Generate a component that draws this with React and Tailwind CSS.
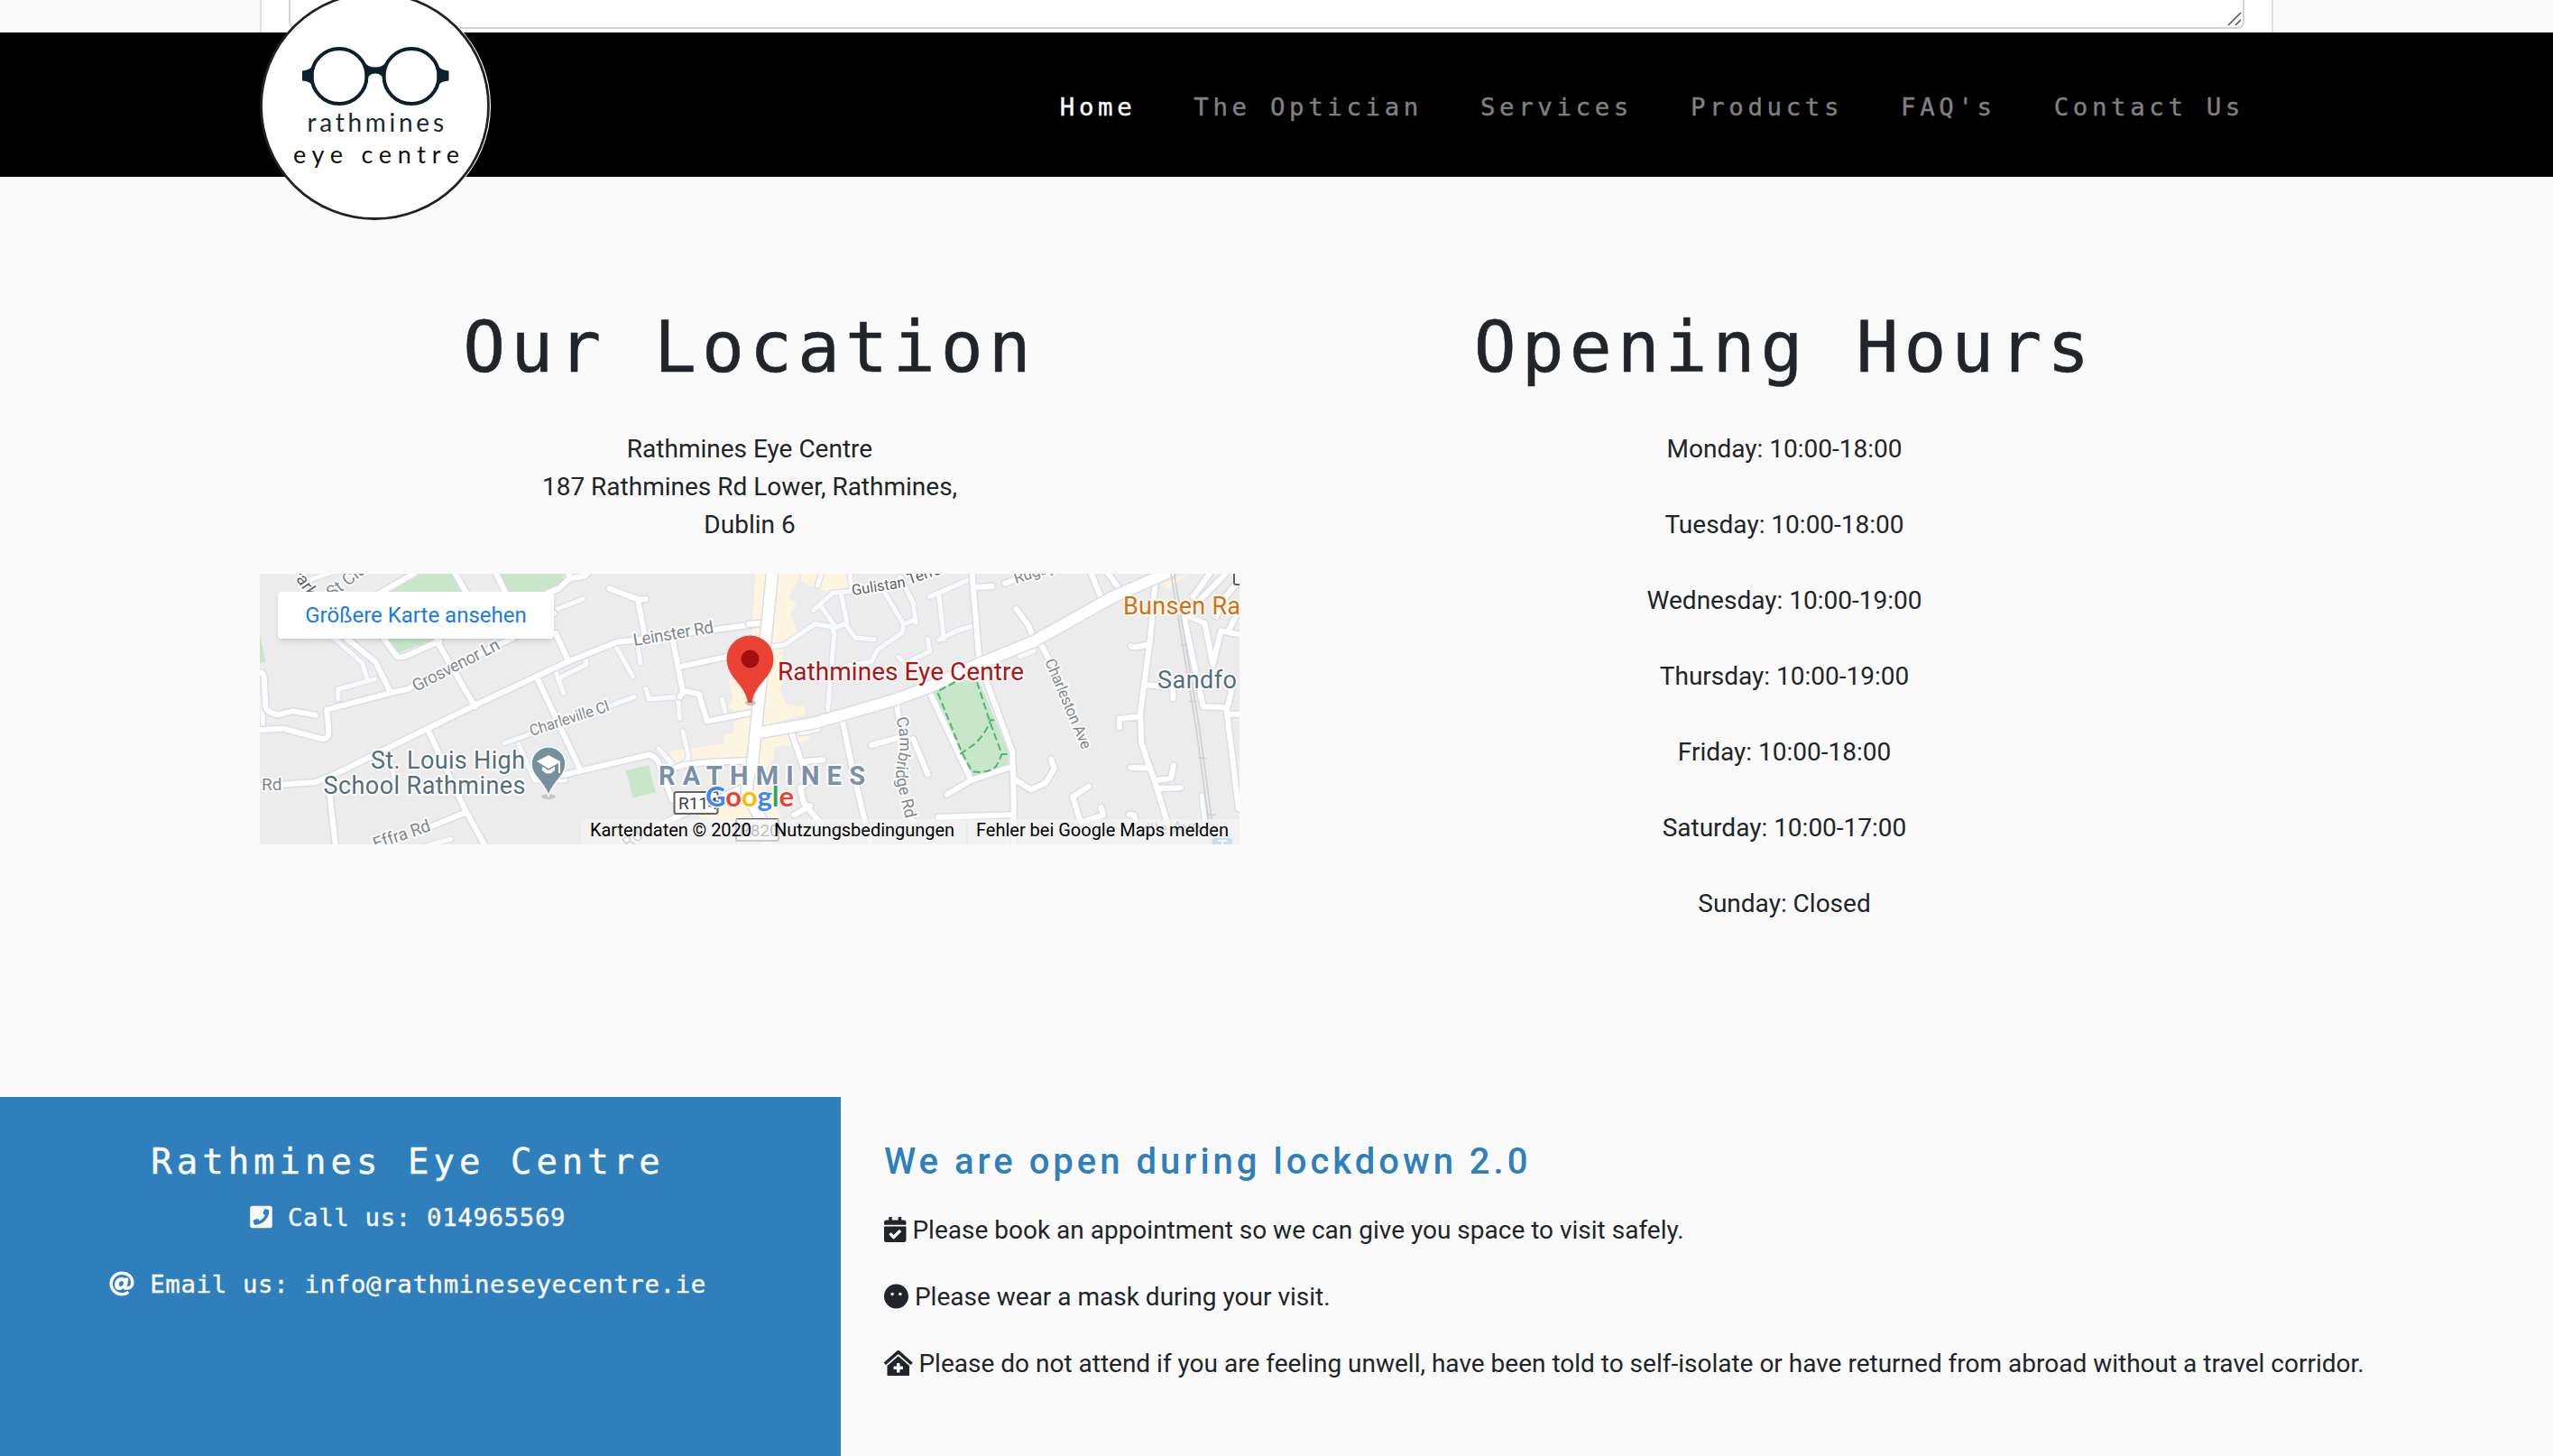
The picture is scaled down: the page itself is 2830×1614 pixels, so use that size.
import React from "react";
import {
  FaPhoneSquare,
  FaAt,
  FaCalendarCheck,
  FaMehBlank,
  FaClinicMedical,
} from "react-icons/fa";

const NAV = ["Home", "The Optician", "Services", "Products", "FAQ's", "Contact Us"];

const HOURS = [
  "Monday: 10:00-18:00",
  "Tuesday: 10:00-18:00",
  "Wednesday: 10:00-19:00",
  "Thursday: 10:00-19:00",
  "Friday: 10:00-18:00",
  "Saturday: 10:00-17:00",
  "Sunday: Closed",
];

// West half of the street network.
const WEST_LANES =
  "M240 250 L340 345 L355 395 M380 398 L265 432 L265 465 M940 375 L965 445 M950 395 L1035 350 L1035 330 M945 165 L1025 132 M30 460 L32 560 M1125 285 L1180 390 M1195 285 L1203 345 M780 612 L1185 458 M825 615 L875 735 L970 735 M1260 630 L1310 690 Q1355 680 1352 650 L1335 572 M500 965 L615 930 M160 75 L240 45 M430 680 L440 730 M1220 430 L1230 465 L1325 457 M1320 460 L1325 530 M1457 465 L1468 515";
const WEST_STREETS =
  "M0 755 L190 742 Q230 730 330 675 L700 480 L980 340 L1130 275 L1180 270 L1580 213 M0 568 L95 563 L215 597 Q235 598 236 575 L230 500 L425 445 L480 432 L830 250 L935 180 M290 262 L380 340 L427 440 M22 375 Q34 375 35 395 L40 490 Q45 512 80 517 L125 505 L195 518 M570 270 L690 490 M545 570 L660 835 L725 960 M885 400 L1015 695 M940 245 L980 338 M500 48 L390 115 M625 40 L665 115 M752 40 L785 112 M915 112 L950 98 L985 62 L1030 57 L1040 45 M985 62 L978 40 M405 262 L445 320 Q455 330 475 322 L580 272 M1107 97 L1195 133 L1220 133 M1195 133 L1217 255 M1305 275 L1335 440 M1335 355 L1490 320 M1325 457 L1340 438 L1385 448 L1410 538 L1548 510 M960 718 L1230 650 Q1255 655 1264 690 L1302 800 M1310 695 Q1330 675 1540 670 M238 775 L258 960 M660 842 L550 890 M1515 760 Q1460 790 1330 850 L1230 900 L1150 960";

// East half, in its own local origin.
const EAST_LANES =
  "M200 170 L260 112 L330 106 M220 150 L270 227 L305 212 L285 112 M300 215 L330 262 L390 266 M312 40 L320 100 M213 88 L225 50 M410 90 L480 215 L475 245 L400 300 L380 340 L300 355 M470 60 L510 145 L518 210 M480 215 L515 202 M560 125 L690 65 M590 120 L605 265 M590 268 L640 240 L695 222 M465 325 L485 347 L562 305 L555 265 M160 578 L215 565 M840 322 L885 305 M70 290 L110 285 L205 215 L260 225 L265 250 L245 500 M1405 785 L1415 870";
const EAST_STREETS =
  "M0 215 L40 212 M692 40 L716 345 M700 93 L755 90 M795 80 L830 65 M830 165 L868 220 L885 268 M903 275 L930 330 M1060 40 L1095 132 M1110 40 L1155 105 M555 430 L690 735 L615 782 M690 735 L815 690 M730 385 L818 640 L822 800 L822 960 M458 478 L466 530 M380 618 L462 594 M510 598 L555 715 M288 525 L320 690 L380 960 M130 570 L185 740 L160 760 L170 810 L240 900 M190 820 L140 850 M175 672 L230 667 M822 730 L875 766 L920 745 L948 695 L938 665 M588 857 L820 850 M1055 755 L1005 790 L1030 875 L1100 850 L1093 825 M1180 848 L1195 850 L1200 870 M500 855 L515 880 M1262 70 L1245 270 L1215 510 L1218 610 L1260 740 L1300 880 M1185 288 Q1195 298 1238 283 M1150 558 L1150 530 L1215 522 M1232 418 L1315 425 L1317 462 M1185 692 L1242 695 M1262 735 L1310 728 L1318 685 M1270 762 L1340 760 M1350 190 L1410 490 L1485 493 L1500 430 M1360 188 L1415 212 L1440 350 L1465 238 L1530 252 M1482 495 L1520 830 M1485 515 L1530 515 M1378 125 L1430 48 M1490 235 L1530 150 M1450 190 L1475 130 M1400 135 L1480 48 M1475 130 L1530 60";

function Streets({ d, casing, fill, outer, inner }) {
  return (
    <g fill="none" strokeLinecap="round" strokeLinejoin="round">
      <path d={d} stroke={casing} strokeWidth={outer} vectorEffect="non-scaling-stroke" />
      <path d={d} stroke={fill} strokeWidth={inner} vectorEffect="non-scaling-stroke" />
    </g>
  );
}

function Label({ x, y, r = 0, size = 19, color = "#80868b", len, weight = 400, children }) {
  return (
    <text
      transform={`translate(${x} ${y}) rotate(${r})`}
      fontSize={size}
      fill={color}
      fontWeight={weight}
      textLength={len}
      stroke="#ffffff"
      strokeOpacity="0.85"
      strokeWidth="4"
      strokeLinejoin="round"
      paintOrder="stroke"
    >
      {children}
    </text>
  );
}

function StreetMap() {
  return (
    <svg
      className="block h-[300px] w-[1086px] font-['Roboto',sans-serif]"
      viewBox="0 0 1086 300"
    >
      <rect width="1086" height="300" fill="#ececec" />
      <g transform="scale(0.357143 0.333333) translate(-22 -48)">
        <g fill="#c8e6c9">
          <path d="M495 48 H618 L660 112 H400 Z M758 48 H965 L963 80 L915 108 H788 Z M418 262 H575 L450 312 Z M22 250 L40 340 L22 346 Z M1158 702 L1230 685 L1250 775 L1180 793 Z" />
        </g>
        <g fill="#fef5e0">
          <path d="M1560 48 H1700 L1665 130 L1690 150 L1668 180 L1690 240 L1615 295 L1648 300 L1640 440 L1655 480 L1710 490 L1715 515 L1580 555 H1585 L1730 590 L1720 605 L1615 628 L1620 660 L1575 720 L1640 860 L1500 865 L1390 862 L1365 800 L1500 760 L1540 665 L1320 685 L1290 640 L1460 612 L1465 580 L1490 580 L1495 540 L1540 520 L1475 495 L1490 460 L1478 400 L1540 410 Z" />
          <path d="M1700 48 H1850 V90 L1780 108 L1705 75 Z M2820 80 L2905 48 L2840 98 Z" />
        </g>
        <g transform="translate(1540 0)">
          <path d="M570 435 L690 398 L720 420 L806 640 L803 688 L692 730 Z" fill="#c8e6c9" />
        </g>
        <Streets d={WEST_LANES} casing="#dde0e6" fill="#f9fafc" outer={7.5} inner={5} />
        <g transform="translate(1540 0)">
          <Streets d={EAST_LANES} casing="#dde0e6" fill="#f9fafc" outer={7.5} inner={5} />
        </g>
        <g>
          <Streets d={WEST_STREETS} casing="#dadde3" fill="#ffffff" outer={9} inner={6} />
        </g>
        <g transform="translate(1540 0)">
          <Streets d={EAST_STREETS} casing="#dadde3" fill="#ffffff" outer={9} inner={6} />
        </g>
        <Streets
          d="M1613 40 L1590 290 L1568 500 L1550 690 Q1530 740 1535 780 L1580 870 L1600 960 M1570 577 L1740 545 L1990 468 L2100 425 L2260 345 L2420 275 L2670 125 L2850 40"
          casing="#dadde3"
          fill="#ffffff"
          outer={15}
          inner={12}
        />
        <g transform="translate(1540 0)" fill="none">
          <path
            d="M1310 48 L1388 560 L1437 948 M1320 48 L1398 560 L1447 948 M1338 285 H1362 M1366 473 H1392 M1396 661 H1420 M1424 849 H1450"
            stroke="#cdd0d4"
            strokeWidth="1.6"
            vectorEffect="non-scaling-stroke"
          />
          <path
            d="M708 408 L748 540 L785 648 L802 648 M640 408 L585 440 L660 640 L692 705 Q740 715 768 688 L785 648 M655 648 L700 615 Q735 580 750 535 H768"
            stroke="#4fb56c"
            strokeWidth="2"
            strokeDasharray="8 4"
            vectorEffect="non-scaling-stroke"
          />
        </g>
      </g>

      <Label x={33} y={-4} r={56} color="#616161">Park</Label>
      <Label x={80} y={28} r={-38}>St Cla</Label>
      <Label x={173} y={131} r={-27} len={106}>Grosvenor Ln</Label>
      <Label x={415} y={80} r={-9.5} len={90}>Leinster Rd</Label>
      <Label x={301} y={180} r={-18} size={17} len={92}>Charleville Cl</Label>
      <Label x={2} y={240}>Rd</Label>
      <Label x={128} y={306} r={-19} len={66}>Effra Rd</Label>
      <Label x={720} y={12} r={-19} size={17} color="#616161">Terrace</Label>
      <Label x={657} y={24} r={-9} size={16.5} color="#616161" len={60}>Gulistan</Label>
      <Label x={838} y={11} r={-18} size={17}>Rugby</Label>
      <Label x={870} y={97} r={67} size={17} len={107}>Charleston Ave</Label>
      <path id="cambridge" d="M705 160 Q711 180 709 198 Q704 215 706 230 L717 276" fill="none" />
      <text
        fontSize="18"
        fill="#80868b"
        stroke="#ffffff"
        strokeOpacity="0.85"
        strokeWidth="4"
        paintOrder="stroke"
      >
        <textPath href="#cambridge">Cambridge Rd</textPath>
      </text>
      <Label x={408} y={306} r={-38}>Rd</Label>
      <Label x={974} y={291} r={-4}>ville Ave</Label>

      <Label x={123} y={215.5} size={27} color="#546e7a" len={171}>St. Louis High</Label>
      <Label x={70.5} y={243.5} size={27} color="#546e7a" len={224}>School Rathmines</Label>
      <Label x={957} y={44.5} size={27} color="#d96f0c" len={130}>Bunsen Ra</Label>
      <Label x={995} y={127} size={27} color="#546e7a" len={88}>Sandfo</Label>
      <Label x={442} y={234} size={29} color="#7b8fa8" weight={700} len={229}>RATHMINES</Label>

      <g transform="translate(320 0)">
        <ellipse cx="0" cy="247" rx="8" ry="3" fill="#c3c6c9" />
        <path
          d="M0 247 C-3 232 -19 225 -19 211 A19 19 0 0 1 19 211 C19 225 3 232 0 247 Z"
          fill="#78909c"
          stroke="#ffffff"
          strokeWidth="1.5"
        />
        <path d="M-13 208 L0 201 L13 208 V221 H11 V210 L0 216 Z" fill="#fff" />
        <path d="M-7 213.500 L0 218 L7 213.500 V218 Q0 225 -7 218 Z" fill="#fff" />
      </g>

      <g>
        <rect x="459.500" y="242" width="48" height="24" rx="2" fill="#fff" stroke="#5f6368" strokeWidth="2" />
        <text x="464" y="260.500" fontSize="19" fill="#3c4043">R114</text>
        <rect x="528" y="272" width="47" height="24" rx="2" fill="#fff" stroke="#5f6368" strokeWidth="2" />
        <text x="532" y="291" fontSize="19" fill="#3c4043">R820</text>
        <rect x="1080" y="-10" width="20" height="22" rx="2" fill="#fff" stroke="#5f6368" strokeWidth="2" />
        <rect x="1056" y="293" width="22" height="14" rx="3" fill="#6fa0e6" />
        <path d="M1062 296 H1072 M1067 296 V300" stroke="#fff" strokeWidth="2" />
      </g>

      <rect x="356" y="272" width="730" height="28" fill="#f5f5f5" fillOpacity="0.7" />
      <path d="M784 272 V300" stroke="#e6e6e6" strokeWidth="1" />

      <text
        x="494"
        y="258"
        className="font-['Lato',sans-serif]"
        fontSize="31"
        fontWeight="700"
        textLength="98"
        stroke="#ffffff"
        strokeWidth="3"
        strokeLinejoin="round"
        paintOrder="stroke"
      >
        <tspan fill="#4285f4">G</tspan>
        <tspan fill="#ea4335">o</tspan>
        <tspan fill="#fbbc05">o</tspan>
        <tspan fill="#4285f4">g</tspan>
        <tspan fill="#34a853">l</tspan>
        <tspan fill="#ea4335">e</tspan>
      </text>

      <g fontSize="20" fill="#000000">
        <text x="366" y="291" textLength="179">Kartendaten © 2020</text>
        <text x="570" y="291" textLength="200">Nutzungsbedingungen</text>
        <text x="794" y="291" textLength="280">Fehler bei Google Maps melden</text>
      </g>

      <ellipse cx="544" cy="143" rx="6" ry="3" fill="#9aa0a6" fillOpacity="0.6" />
      <path
        d="M541 143 C538 122 518 116 517.500 94.500 A26 26 0 0 1 569.500 94.500 C569 116 548 122 545.500 143 Z"
        fill="#ea4335"
      />
      <circle cx="543.500" cy="94.500" r="10" fill="#a50e0e" />
      <Label x={574} y={118} size={28} color="#b31412" len={273}>Rathmines Eye Centre</Label>
    </svg>
  );
}

function Logo() {
  return (
    <svg className="absolute -top-[45px] left-[287px] h-[254px] w-[258px]" viewBox="287 -9 258 254">
      <ellipse cx="416.500" cy="117.500" rx="127.500" ry="126.500" fill="#ffffff" />
      <ellipse cx="415.500" cy="117.500" rx="126" ry="125" fill="#ffffff" stroke="#222222" strokeWidth="2.800" />
      <g fill="none" stroke="#0d1f28" strokeWidth="4">
        <circle cx="376" cy="84.500" r="30.500" />
        <circle cx="456" cy="84.500" r="30.500" />
      </g>
      <g fill="#0d1f28">
        <path d="M404 69 Q408 74.500 416 74.500 Q424 74.500 428 69 L427 91 Q424 81.500 416 81.500 Q408 81.500 405 91 Z" />
        <path d="M335 78.500 Q342 78.500 348 72 L347 96 Q344 89.500 335 89.500 Z" />
        <path d="M497.500 78.500 Q490 78.500 484 72 L485 96 Q488 89.500 497.500 89.500 Z" />
      </g>
      <g className="font-['Lato',sans-serif]" fill="#1c2833">
        <text x="340.500" y="145.700" fontSize="28" textLength="151.500">rathmines</text>
        <text x="325" y="181" fontSize="27" fill="#111111" textLength="184">eye centre</text>
      </g>
    </svg>
  );
}

function Heading({ children }) {
  return (
    <h1 className="mb-11 font-['DejaVu_Sans_Mono',monospace] text-[78px] leading-[96px] tracking-[6px] [-webkit-text-stroke:0.5px_currentColor]">
      {children}
    </h1>
  );
}

function Notice({ icon, children }) {
  return (
    <p className="mb-8 whitespace-nowrap">
      {icon} {children}
    </p>
  );
}

export default function App() {
  return (
    <div className="flex h-[1614px] w-[2830px] flex-col overflow-hidden bg-[#fafafa] font-['Roboto',sans-serif] text-[28px] leading-[42px] text-[#212529]">
      <div className="flex h-9 shrink-0 pl-[288px]">
        <div className="h-9 w-[2232px] border-x-2 border-[#dfdfdf] bg-white px-[30px]">
          <div className="flex h-8 items-end justify-end rounded-b-lg border-2 border-t-0 border-[#ced4da] bg-white pr-px pb-px">
            <svg className="h-4 w-4" viewBox="0 0 16 16">
              <path d="M1 15 L15 1 M9 15 L15 9" stroke="#555" strokeWidth="1.600" />
            </svg>
          </div>
        </div>
      </div>

      <header className="relative flex h-40 shrink-0 items-center justify-end bg-black pt-[5px] pr-[342px]">
        <Logo />
        <nav className="flex gap-16 font-['DejaVu_Sans_Mono',monospace] text-[27.4px] tracking-[4.64px] text-[#808080] [-webkit-text-stroke:0.4px_currentColor]">
          {NAV.map((item, i) => (
            <a key={item} className={i === 0 ? "text-white" : ""}>
              {item}
            </a>
          ))}
        </nav>
      </header>

      <main className="grid h-[1020px] shrink-0 grid-cols-[1086px_1086px] gap-[61px] pt-[141px] pl-[288px] text-center">
        <section>
          <Heading>Our Location</Heading>
          <p>
            Rathmines Eye Centre
            <br />
            187 Rathmines Rd Lower, Rathmines,
            <br />
            Dublin 6
          </p>
          <div className="relative mt-[33px]">
            <StreetMap />
            <a className="absolute top-5 left-5 flex h-[52px] w-[306px] items-center justify-center rounded-sm bg-white text-2xl text-[#1a7be0] shadow-md">
              Größere Karte ansehen
            </a>
          </div>
        </section>
        <section>
          <Heading>Opening Hours</Heading>
          {HOURS.map((line) => (
            <p key={line} className="mb-[42px]">
              {line}
            </p>
          ))}
        </section>
      </main>

      <footer className="flex flex-1">
        <section className="w-[932px] bg-[#2f7fbd] pt-12 pr-7 text-center font-['DejaVu_Sans_Mono',monospace] text-[27.4px] tracking-[0.64px] text-[#fafafa] [-webkit-text-stroke:0.4px_currentColor]">
          <h2 className="mb-[17px] text-[39px] leading-[48px] tracking-[5px]">Rathmines Eye Centre</h2>
          <p className="mb-8">
            <FaPhoneSquare className="inline h-7 w-[25px] align-[-3.5px]" /> Call us: 014965569
          </p>
          <p>
            <FaAt className="inline h-7 w-7 align-[-3.5px]" /> Email us: info@rathmineseyecentre.ie
          </p>
        </section>
        <section className="flex-1 pt-12 pl-12">
          <h2 className="mb-[31px] text-[40px] leading-[48px] font-medium tracking-[4px] text-[#2f7fbd]">
            We are open during lockdown 2.0
          </h2>
          <Notice icon={<FaCalendarCheck className="inline h-7 w-[24.5px] align-[-3.5px]" />}>
            Please book an appointment so we can give you space to visit safely.
          </Notice>
          <Notice icon={<FaMehBlank className="inline h-7 w-[27px] align-[-3.5px]" />}>
            Please wear a mask during your visit.
          </Notice>
          <Notice icon={<FaClinicMedical className="inline h-7 w-[31.5px] align-[-3.5px]" />}>
            Please do not attend if you are feeling unwell, have been told to self-isolate or have returned from
            abroad without a travel corridor.
          </Notice>
        </section>
      </footer>
    </div>
  );
}
